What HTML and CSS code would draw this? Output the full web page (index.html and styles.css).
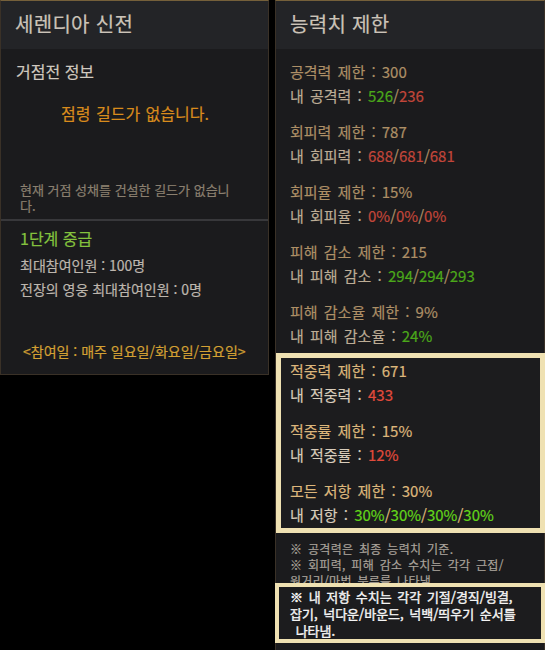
FILE: index.html
```html
<!DOCTYPE html>
<html lang="ko">
<head>
  <meta charset="UTF-8">
  <meta name="viewport" content="width=device-width, initial-scale=1.0">
  <title>거점전</title>
  <link rel="stylesheet" href="styles.css">
</head>
<body>
  <div class="board">
    <div class="panel panel-base">
      <div class="panel-head">세렌디아 신전</div>
      <div class="base-top">
        <p class="sub-title">거점전 정보</p>
        <p class="owner">점령 길드가 없습니다.</p>
        <p class="owner-note">현재 거점 성채를 건설한 길드가 없습니다.</p>
      </div>
      <div class="base-bottom">
        <p class="grade">1단계 중급</p>
        <p class="info">최대참여인원 : 100명</p>
        <p class="info">전장의 영웅 최대참여인원 : 0명</p>
        <p class="days">&lt;참여일 : 매주 일요일/화요일/금요일&gt;</p>
      </div>
    </div>

    <div class="panel panel-stats">
      <div class="panel-head">능력치 제한</div>
      <div class="stats">
        <div class="stat">
          <p class="limit">공격력 제한 : 300</p>
          <p class="mine">내 공격력 : <span class="ok">526</span><span class="sep">/</span><span class="bad">236</span></p>
        </div>
        <div class="stat">
          <p class="limit">회피력 제한 : 787</p>
          <p class="mine">내 회피력 : <span class="bad">688</span><span class="sep">/</span><span class="bad">681</span><span class="sep">/</span><span class="bad">681</span></p>
        </div>
        <div class="stat">
          <p class="limit">회피율 제한 : 15%</p>
          <p class="mine">내 회피율 : <span class="bad">0%</span><span class="sep">/</span><span class="bad">0%</span><span class="sep">/</span><span class="bad">0%</span></p>
        </div>
        <div class="stat">
          <p class="limit">피해 감소 제한 : 215</p>
          <p class="mine">내 피해 감소 : <span class="ok">294</span><span class="sep">/</span><span class="ok">294</span><span class="sep">/</span><span class="ok">293</span></p>
        </div>
        <div class="stat">
          <p class="limit">피해 감소율 제한 : 9%</p>
          <p class="mine">내 피해 감소율 : <span class="ok">24%</span></p>
        </div>

        <div class="mark">
          <div class="stat">
            <p class="limit">적중력 제한 : 671</p>
            <p class="mine">내 적중력 : <span class="bad">433</span></p>
          </div>
          <div class="stat">
            <p class="limit">적중률 제한 : 15%</p>
            <p class="mine">내 적중률 : <span class="bad">12%</span></p>
          </div>
          <div class="stat">
            <p class="limit">모든 저항 제한 : 30%</p>
            <p class="mine">내 저항 : <span class="ok">30%</span><span class="sep">/</span><span class="ok">30%</span><span class="sep">/</span><span class="ok">30%</span><span class="sep">/</span><span class="ok">30%</span></p>
          </div>
        </div>
      </div>

      <div class="notes">
        <p>※ 공격력은 최종 능력치 기준.</p>
        <p>※ 회피력, 피해 감소 수치는 각각 근접/원거리/마법 분류를 나타냄.</p>
      </div>
      <div class="mark mark-note">
        <p>※ 내 저항 수치는 각각 기절/경직/빙결, 잡기, 넉다운/바운드, 넉백/띄우기 순서를<br>&nbsp;나타냄.</p>
      </div>
    </div>
  </div>
</body>
</html>
```

FILE: styles.css
```css
* {
  margin: 0;
  padding: 0;
  box-sizing: border-box;
}

body {
  background: #000;
  font-family: "Noto Sans CJK KR", "Noto Sans", sans-serif;
  word-break: break-all;
  -webkit-text-stroke: 0.2px currentColor;
}

.board {
  display: flex;
  align-items: flex-start;
  gap: 6px;
  width: 545px;
  height: 650px;
  overflow: hidden;
}

.panel {
  background: #1b1b1d;
  border: 1px solid #3a3127;
  border-top: 1px solid #75603a;
}

.panel-head {
  height: 48px;
  line-height: 46px;
  padding-left: 14px;
  background: #232427;
  color: #cbc3b8;
  font-size: 20px;
  letter-spacing: 0.3px;
}

/* left panel */
.panel-base {
  width: 269px;
  height: 375px;
}

.base-top {
  padding: 11px 14px 0 15px;
}

.sub-title {
  line-height: 22px;
  font-size: 16px;
  color: #d0c9bf;
}

.owner {
  margin-top: 20px;
  line-height: 22px;
  font-size: 16px;
  word-spacing: 1px;
  color: #d98c1c;
  text-align: center;
}

.owner-note {
  margin-top: 58px;
  padding: 0 18px 0 4px;
  line-height: 16px;
  font-size: 13px;
  color: #8b8070;
}

.base-bottom {
  margin-top: 5px;
  border-top: 2px solid #38383b;
  padding: 6px 14px 0 19px;
}

.grade {
  line-height: 22px;
  font-size: 16px;
  color: #84c23e;
}

.info {
  line-height: 24px;
  font-size: 14px;
  color: #bdb6ad;
}

.grade + .info {
  margin-top: 4px;
}

.days {
  margin-top: 39px;
  padding-left: 3px;
  line-height: 22px;
  font-size: 14px;
  color: #d3a033;
}

/* right panel */
.panel-stats {
  width: 270px;
  height: 660px;
}

.stats {
  padding-top: 11px;
}

.stat {
  padding: 0 14px;
}

.stat + .stat {
  margin-top: 12px;
}

.stat p {
  line-height: 24px;
  font-size: 15px;
  word-spacing: 2px;
}

.limit {
  color: #ad8f66;
}

.mine {
  color: #bcac95;
}

.sep {
  color: #ad8f66;
}

.ok {
  color: #4ba81a;
}

.bad {
  color: #c2463a;
}

.mark {
  margin: 5px -1px 0 0;
  border: 5px solid #efe1b2;
  background: #1c1c1e;
  padding: 1px 0;
}

.mark .stat {
  padding-left: 9px;
}

.mark .limit {
  color: #dcb67b;
}

.mark .mine {
  color: #d8ccbb;
}

.mark .sep {
  color: #dcb67b;
}

.mark .ok {
  color: #62d41a;
}

.mark .bad {
  color: #e24b3c;
}

.notes {
  margin-top: 8px;
  padding: 0 14px 0 14px;
  font-size: 12px;
  line-height: 16px;
  letter-spacing: 0.3px;
  word-spacing: 2px;
  word-break: keep-all;
  color: #aaa39b;
}

.mark-note {
  position: relative;
  margin: -6px -1px 0 -1px;
  border-width: 4px;
  padding: 1px 13px 0 11px;
  font-size: 13px;
  line-height: 17px;
  word-spacing: 2px;
  color: #f4f4f4;
  -webkit-text-stroke: 0.4px currentColor;
}
```
